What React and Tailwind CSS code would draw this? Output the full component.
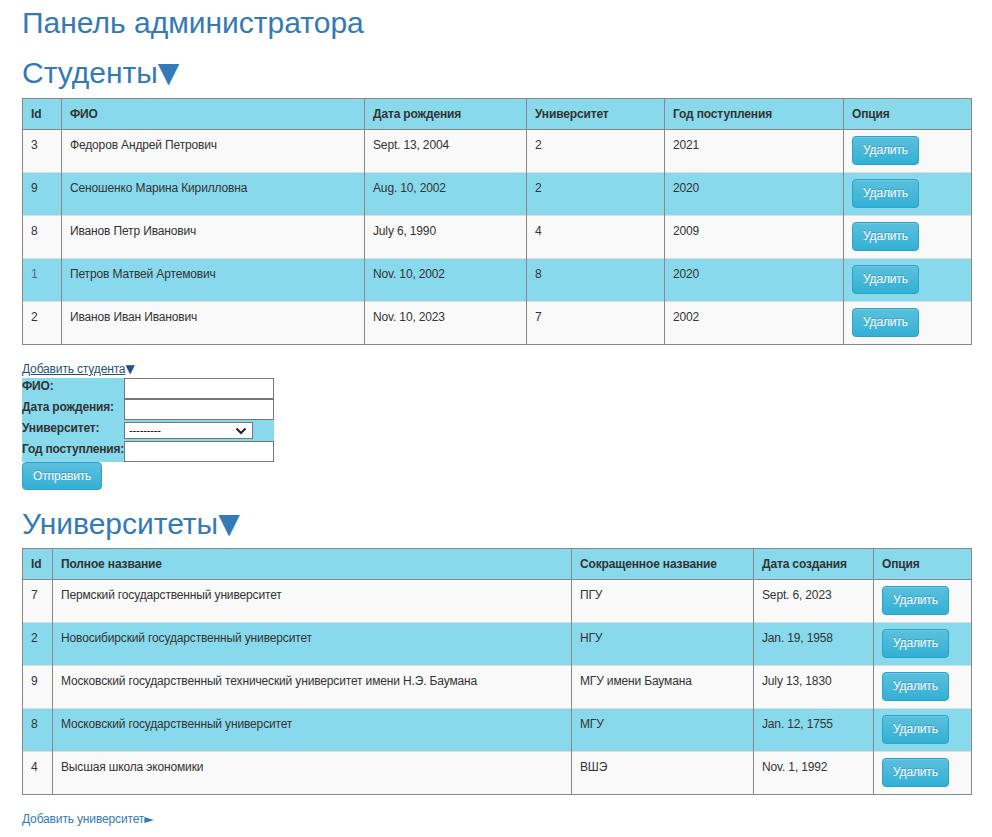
import React from "react";

const students = [
  { id: 3, name: "Федоров Андрей Петрович", born: "Sept. 13, 2004", uni: 2, year: 2021 },
  { id: 9, name: "Сеношенко Марина Кирилловна", born: "Aug. 10, 2002", uni: 2, year: 2020 },
  { id: 8, name: "Иванов Петр Иванович", born: "July 6, 1990", uni: 4, year: 2009 },
  { id: 1, name: "Петров Матвей Артемович", born: "Nov. 10, 2002", uni: 8, year: 2020 },
  { id: 2, name: "Иванов Иван Иванович", born: "Nov. 10, 2023", uni: 7, year: 2002 },
];

const universities = [
  { id: 7, full: "Пермский государственный университет", short: "ПГУ", date: "Sept. 6, 2023" },
  { id: 2, full: "Новосибирский государственный университет", short: "НГУ", date: "Jan. 19, 1958" },
  { id: 9, full: "Московский государственный технический университет имени Н.Э. Баумана", short: "МГУ имени Баумана", date: "July 13, 1830" },
  { id: 8, full: "Московский государственный университет", short: "МГУ", date: "Jan. 12, 1755" },
  { id: 4, full: "Высшая школа экономики", short: "ВШЭ", date: "Nov. 1, 1992" },
];

const th = "h-[31px] border border-[#888] px-2 text-left align-middle font-bold";
const td = "h-[43px] border-x border-x-[#888] border-t border-t-[#ddd] px-2 pt-[7px] align-top";

function DeleteButton() {
  return (
    <button
      type="button"
      className="mt-[-1px] h-[29px] rounded border border-[#28a4c9] bg-gradient-to-b from-[#5bc0de] to-[#31b0d5] px-[10px] text-[12px] text-white [text-shadow:0_-1px_0_rgba(0,0,0,0.2)] shadow-[inset_0_1px_0_rgba(255,255,255,0.15)]"
    >
      Удалить
    </button>
  );
}

function Heading({ children }) {
  return (
    <h2 className="flex h-[33px] items-center whitespace-nowrap text-[30px] leading-[33px] tracking-normal text-[#337ab7]">
      {children}
      <span className="font-['DejaVu_Sans',sans-serif] text-[28px] leading-[33px]">▼</span>
    </h2>
  );
}

const inputCls = "block h-[21px] w-[150px] border border-[#767676] bg-white px-1";

export default function App() {
  return (
    <div className="min-h-screen bg-white px-[22px] pt-[6px] pb-6 font-['Liberation_Sans',Arial,sans-serif] text-[12px] leading-[17px] tracking-[-0.15px] text-[#333]">
      <h1 className="h-[33px] text-[30px] leading-[33px] tracking-normal text-[#337ab7]">Панель администратора</h1>

      <div className="mt-[17px]">
        <Heading>Студенты</Heading>
      </div>

      <table className="mt-[9px] w-[950px] table-fixed border-collapse border border-[#888]">
        <thead>
          <tr className="bg-[#89d9ed]">
            <th className={`${th} w-[39px]`}>Id</th>
            <th className={`${th} w-[303px]`}>ФИО</th>
            <th className={`${th} w-[162px]`}>Дата рождения</th>
            <th className={`${th} w-[138px]`}>Университет</th>
            <th className={`${th} w-[179px]`}>Год поступления</th>
            <th className={th}>Опция</th>
          </tr>
        </thead>
        <tbody>
          {students.map((s, i) => (
            <tr key={s.id} className={i % 2 ? "bg-[#89d9ed]" : "bg-[#f9f9f9]"}>
              <td className={`${td} ${s.id === 1 ? "text-[#3d6f9c]" : ""}`}>{s.id}</td>
              <td className={td}>{s.name}</td>
              <td className={td}>{s.born}</td>
              <td className={td}>{s.uni}</td>
              <td className={td}>{s.year}</td>
              <td className={td}>
                <DeleteButton />
              </td>
            </tr>
          ))}
        </tbody>
      </table>

      <div className="mt-[16px] flex h-[17px] items-center">
        <a href="#" className="text-[#23527c] underline">Добавить студента</a>
        <span className="font-['DejaVu_Sans',sans-serif] text-[12px] text-[#23527c]">▼</span>
      </div>

      <form>
        <table className="border-collapse bg-[#89d9ed]">
          <tbody>
            <tr className="h-[21px]">
              <th className="w-[102px] whitespace-nowrap p-0 text-left align-top font-bold">ФИО:</th>
              <td className="p-0 align-top">
                <input className={inputCls} />
              </td>
            </tr>
            <tr className="h-[21px]">
              <th className="whitespace-nowrap p-0 text-left align-top font-bold">Дата рождения:</th>
              <td className="p-0 align-top">
                <input className={inputCls} />
              </td>
            </tr>
            <tr className="h-[21px]">
              <th className="whitespace-nowrap p-0 text-left align-top font-bold">Университет:</th>
              <td className="p-0 align-middle">
                <div className="relative flex h-[17px] w-[129px] items-center border border-[#767676] bg-white px-1 text-[11px] text-black">
                  ---------
                  <svg className="absolute right-[5px] top-[4px]" width="12" height="8" viewBox="0 0 12 8">
                    <path d="M1.5 1.5 L6 6 L10.5 1.5" fill="none" stroke="#222" strokeWidth="2" />
                  </svg>
                </div>
              </td>
            </tr>
            <tr className="h-[21px]">
              <th className="whitespace-nowrap p-0 text-left align-top font-bold tracking-[-0.2px]">Год поступления:</th>
              <td className="p-0 align-top">
                <input className={inputCls} />
              </td>
            </tr>
          </tbody>
        </table>
        <button
          type="button"
          className="block h-[28px] rounded border border-[#28a4c9] bg-gradient-to-b from-[#5bc0de] to-[#31b0d5] px-[10px] text-[12px] text-white [text-shadow:0_-1px_0_rgba(0,0,0,0.2)]"
        >
          Отправить
        </button>
      </form>

      <div className="mt-[17px]">
        <Heading>Университеты</Heading>
      </div>

      <table className="mt-[8px] w-[950px] table-fixed border-collapse border border-[#888]">
        <thead>
          <tr className="bg-[#89d9ed]">
            <th className={`${th} w-[30px]`}>Id</th>
            <th className={`${th} w-[519px]`}>Полное название</th>
            <th className={`${th} w-[182px]`}>Сокращенное название</th>
            <th className={`${th} w-[120px]`}>Дата создания</th>
            <th className={th}>Опция</th>
          </tr>
        </thead>
        <tbody>
          {universities.map((u, i) => (
            <tr key={u.id} className={i % 2 ? "bg-[#89d9ed]" : "bg-[#f9f9f9]"}>
              <td className={td}>{u.id}</td>
              <td className={td}>{u.full}</td>
              <td className={td}>{u.short}</td>
              <td className={td}>{u.date}</td>
              <td className={td}>
                <DeleteButton />
              </td>
            </tr>
          ))}
        </tbody>
      </table>

      <div className="mt-[16px] flex h-[17px] items-center">
        <a href="#" className="text-[#337ab7]">Добавить университет</a>
        <span className="font-['DejaVu_Sans',sans-serif] text-[12px] text-[#337ab7]">►</span>
      </div>
    </div>
  );
}
